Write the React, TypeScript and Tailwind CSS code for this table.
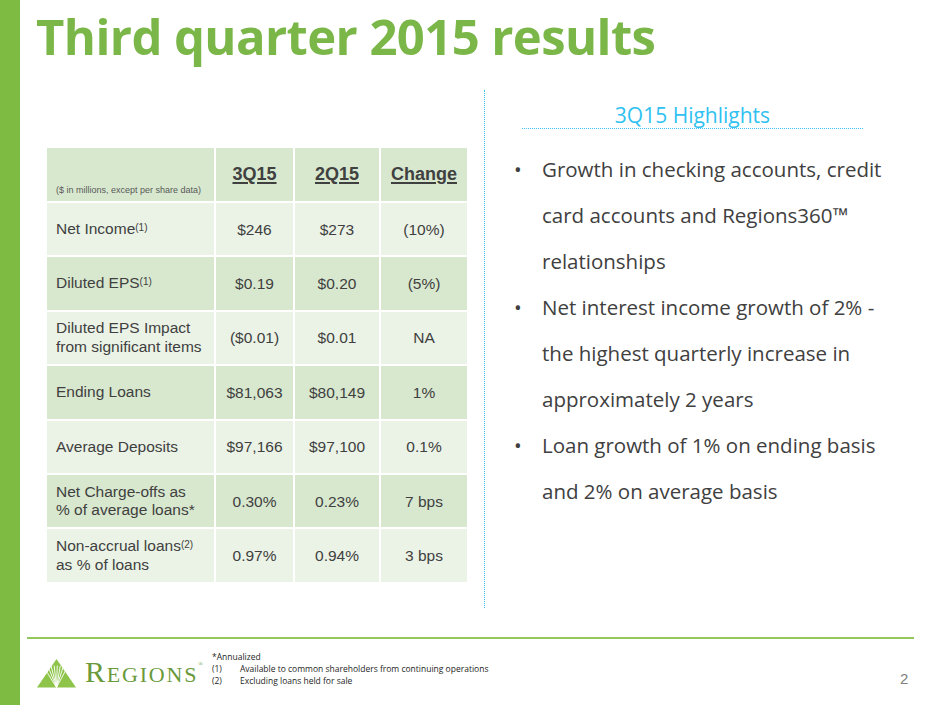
import React from "react";

type Row = {
  label: React.ReactNode;
  q3: string;
  q2: string;
  change: string;
  dark: boolean;
};

const Sup = ({ children }: { children: React.ReactNode }) => (
  <sup className="text-[10px] relative -top-[3px]">{children}</sup>
);

const rows: Row[] = [
  { label: <>Net Income<Sup>(1)</Sup></>, q3: "$246", q2: "$273", change: "(10%)", dark: false },
  { label: <>Diluted EPS<Sup>(1)</Sup></>, q3: "$0.19", q2: "$0.20", change: "(5%)", dark: true },
  {
    label: <>Diluted EPS Impact<br />from significant items</>,
    q3: "($0.01)",
    q2: "$0.01",
    change: "NA",
    dark: false,
  },
  { label: "Ending Loans", q3: "$81,063", q2: "$80,149", change: "1%", dark: true },
  { label: "Average Deposits", q3: "$97,166", q2: "$97,100", change: "0.1%", dark: false },
  {
    label: <>Net Charge-offs as<br />% of average loans*</>,
    q3: "0.30%",
    q2: "0.23%",
    change: "7 bps",
    dark: true,
  },
  {
    label: <>Non-accrual loans<Sup>(2)</Sup><br />as % of loans</>,
    q3: "0.97%",
    q2: "0.94%",
    change: "3 bps",
    dark: false,
  },
];

const bullets: React.ReactNode[] = [
  <>Growth in checking accounts, credit<br />card accounts and Regions360™<br />relationships</>,
  <>Net interest income growth of 2% -<br />the highest quarterly increase in<br />approximately 2 years</>,
  <>Loan growth of 1% on ending basis<br />and 2% on average basis</>,
];

function RegionsLogo() {
  const rays = [62, 72, 80, 88, 96, 104, 112, 122];
  return (
    <div className="flex items-end gap-[8px]">
      <svg width="40" height="29" viewBox="0 0 40 29">
        <polygon points="0,28.5 19.5,0 39,28.5" fill="#8dc449" />
        {rays.map((deg) => {
          const r = (deg * Math.PI) / 180;
          const x2 = 19.5 + Math.cos(r) * 22;
          const y2 = 28.5 - Math.sin(r) * 22;
          return (
            <line
              key={deg}
              x1="19.5"
              y1="28.5"
              x2={x2}
              y2={y2}
              stroke="#ffffff"
              strokeWidth="0.9"
            />
          );
        })}
      </svg>
      <div
        className="flex items-baseline text-[#6a9a3b] leading-none tracking-[1.8px] mb-[1px]"
        style={{ fontFamily: '"Liberation Serif", serif' }}
      >
        <span className="text-[30px]">R</span>
        <span className="text-[22px]">EGIONS</span>
        <span className="text-[6px] self-start mt-[4px] tracking-normal">®</span>
      </div>
    </div>
  );
}

export default function App() {
  return (
    <div className="w-[940px] h-[705px] bg-white flex overflow-hidden">
      {/* green side bar */}
      <div className="w-[20px] h-full bg-[#7dbb42] shrink-0" />

      <div className="flex-1 flex flex-col">
        {/* title */}
        <div
          className="h-[90px] pl-[16px] pt-[12px] text-[49px] leading-none font-bold text-[#7ab648] tracking-[-0.6px]"
          style={{ fontFamily: '"Open Sans", sans-serif' }}
        >
          Third quarter 2015 results
        </div>

        {/* middle */}
        <div className="flex h-[518px]">
          {/* table */}
          <div
            className="w-[464px] shrink-0 pl-[27px] pt-[58px] text-[#404040]"
            style={{ fontFamily: '"Liberation Sans", Arial, sans-serif' }}
          >
            <div className="grid grid-cols-[167px_77px_84px_86px] gap-[2px]">
              <div className="h-[53px] bg-[#d8e8cf] flex items-end pl-[9px] pb-[4px] text-[9px] text-[#595959]">
                ($ in millions, except per share data)
              </div>
              {["3Q15", "2Q15", "Change"].map((h) => (
                <div
                  key={h}
                  className="h-[53px] bg-[#d8e8cf] flex items-center justify-center text-[18px] font-bold underline underline-offset-[2px] decoration-[1.5px]"
                >
                  {h}
                </div>
              ))}
              {rows.map((r, i) => {
                const bg = r.dark ? "bg-[#d8e8cf]" : "bg-[#ebf3e6]";
                return (
                  <React.Fragment key={i}>
                    <div className={`h-[52.4px] ${bg} flex items-center pl-[9px] text-[15.5px] leading-[18.5px]`}>
                      <span>{r.label}</span>
                    </div>
                    <div className={`h-[52.4px] ${bg} flex items-center justify-center text-[15.5px]`}>{r.q3}</div>
                    <div className={`h-[52.4px] ${bg} flex items-center justify-center text-[15.5px]`}>{r.q2}</div>
                    <div className={`h-[52.4px] ${bg} flex items-center justify-center text-[15.5px]`}>{r.change}</div>
                  </React.Fragment>
                );
              })}
            </div>
          </div>

          {/* dotted divider */}
          <div className="w-0 h-full border-l border-dotted border-[#3cc3f2]" />

          {/* highlights */}
          <div className="flex-1 pt-[15px]" style={{ fontFamily: '"Open Sans", sans-serif' }}>
            <div className="ml-[37px] w-[341px] text-center text-[21px] leading-[21px] pb-[2px] text-[#2fc1f1] border-b border-dotted border-[#3cc3f2]">
              3Q15 Highlights
            </div>
            <ul className="mt-[17px] ml-[29px] text-[20.5px] leading-[46px] text-[#404040]">
              {bullets.map((b, i) => (
                <li key={i} className="flex">
                  <span className="w-[28px] shrink-0">•</span>
                  <span>{b}</span>
                </li>
              ))}
            </ul>
          </div>
        </div>

        {/* footer */}
        <div className="mt-[29px] ml-[7px] w-[887px] h-[2px] bg-[#92c85c]" />
        <div className="flex pl-[17px]">
          <div className="w-[175px] shrink-0 pt-[18px]">
            <RegionsLogo />
          </div>
          <div
            className="flex-1 pt-[12px] text-[8.5px] leading-[12px] text-[#262626]"
            style={{ fontFamily: '"Open Sans", sans-serif' }}
          >
            <div>*Annualized</div>
            <div className="flex">
              <span className="w-[28px]">(1)</span>
              <span>Available to common shareholders from continuing operations</span>
            </div>
            <div className="flex">
              <span className="w-[28px]">(2)</span>
              <span>Excluding loans held for sale</span>
            </div>
          </div>
          <div
            className="w-[40px] pt-[29px] text-[15px] text-[#7f7f7f]"
            style={{ fontFamily: '"Liberation Sans", Arial, sans-serif' }}
          >
            2
          </div>
        </div>
      </div>
    </div>
  );
}
